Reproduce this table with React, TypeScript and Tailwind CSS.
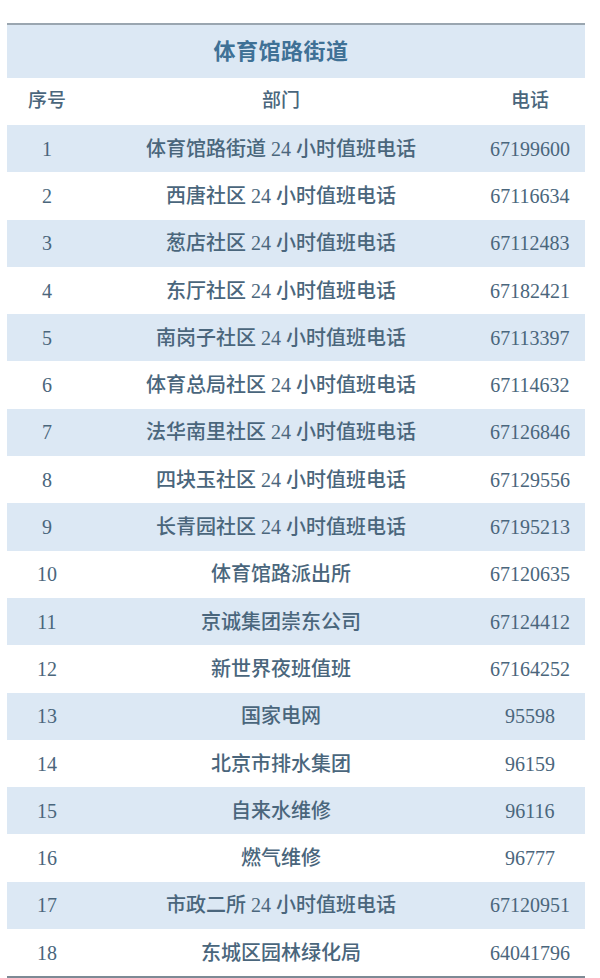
import React from "react";

const rows: [string, string, string][] = [
  ["1", "体育馆路街道 24 小时值班电话", "67199600"],
  ["2", "西唐社区 24 小时值班电话", "67116634"],
  ["3", "葱店社区 24 小时值班电话", "67112483"],
  ["4", "东厅社区 24 小时值班电话", "67182421"],
  ["5", "南岗子社区 24 小时值班电话", "67113397"],
  ["6", "体育总局社区 24 小时值班电话", "67114632"],
  ["7", "法华南里社区 24 小时值班电话", "67126846"],
  ["8", "四块玉社区 24 小时值班电话", "67129556"],
  ["9", "长青园社区 24 小时值班电话", "67195213"],
  ["10", "体育馆路派出所", "67120635"],
  ["11", "京诚集团崇东公司", "67124412"],
  ["12", "新世界夜班值班", "67164252"],
  ["13", "国家电网", "95598"],
  ["14", "北京市排水集团", "96159"],
  ["15", "自来水维修", "96116"],
  ["16", "燃气维修", "96777"],
  ["17", "市政二所 24 小时值班电话", "67120951"],
  ["18", "东城区园林绿化局", "64041796"],
];

export default function App() {
  return (
    <div className="w-[600px] h-[978px] bg-white overflow-hidden">
      <div
        className="ml-[7px] w-[578px] pt-[23px] text-[#4a667c]"
        style={{ fontFamily: "'Liberation Serif', 'Noto Sans CJK SC', serif" }}
      >
        <div className="border-t-2 border-[#9aa6b0] bg-[#dce8f4] h-[55px] grid grid-cols-[80px_388px_110px] items-center">
          <div />
          <div className="text-center text-[22px] font-semibold text-[#3f7196] tracking-[0.5px]">
            体育馆路街道
          </div>
          <div />
        </div>
        <div className="h-[47px] grid grid-cols-[80px_388px_110px] items-center text-[19px] font-medium">
          <div className="text-center">序号</div>
          <div className="text-center">部门</div>
          <div className="text-center">电话</div>
        </div>
        {rows.map((r, i) => (
          <div
            key={r[0]}
            className={
              "h-[47.3px] grid grid-cols-[80px_388px_110px] items-center text-[20px] font-medium " +
              (i % 2 === 0 ? "bg-[#dce8f4]" : "bg-white")
            }
          >
            <div className="text-center">{r[0]}</div>
            <div className="text-center">{r[1]}</div>
            <div className="text-center">{r[2]}</div>
          </div>
        ))}
        <div className="border-t-2 border-[#7d8a95]" />
      </div>
    </div>
  );
}
